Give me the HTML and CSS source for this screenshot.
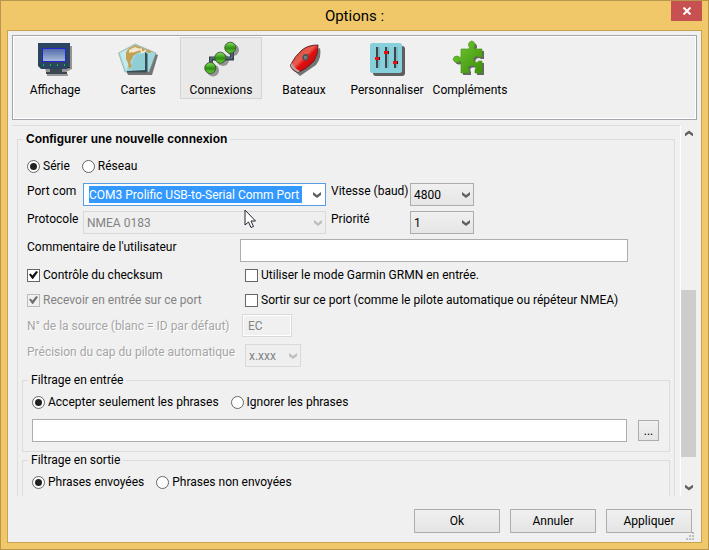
FILE: index.html
```html
<!DOCTYPE html>
<html lang="fr">
<head>
<meta charset="utf-8">
<title>Options</title>
<link rel="stylesheet" href="styles.css">
</head>
<body>
<div class="window">
  <header class="titlebar">
    <h1>Options :</h1>
    <button class="close" type="button" aria-label="Fermer"><svg width="10" height="8" viewBox="0 0 10 8"><path d="M1.5 0.5 8.5 7.5M8.5 0.5 1.5 7.5" stroke="#fff" stroke-width="2"/></svg></button>
  </header>
  <form class="content">
    <nav class="toolbar">
      <button type="button" class="tool">
        <svg viewBox="0 0 36 36"><defs><linearGradient id="scr" x2="0" y2="1"><stop stop-color="#5069a6"/><stop offset="1" stop-color="#a9bddb"/></linearGradient></defs>
          <path d="M3 5H35V28L29 31H9z" fill="#777" opacity=".75"/><path d="M10 33H31V35H10z" fill="#999"/>
          <path d="M1 2H33V25L30 28H4L1 25z" fill="#2b4461"/><path d="M13 28H25V31H30V33H9V31H13z" fill="#3b4651"/>
          <rect x="5.5" y="7.500" width="23" height="13" fill="url(#scr)" stroke="#2525cf"/>
          <path d="M6 23h1v2h-1zM13 23h1v2h-1zM20 23h1v2h-1zM27 23h1v2h-1z" fill="#13c522"/><path d="M31 26h2v1h-2z" fill="#111"/></svg>
        <span>Affichage</span>
      </button>
      <button type="button" class="tool">
        <svg viewBox="0 0 36 36"><path d="M17 6 38 14 32 34H8L1 17z" fill="#555" opacity=".8"/>
          <path d="M15 3 36 12 29 31H5L-1.500 12z" fill="#9fd9df" stroke="#8d9c98" stroke-width=".6"/>
          <path d="M0 12 15 4 10 19 6 30z" fill="#c6e9eb"/>
          <path d="M6 12 8 8 15 4 20 6 25 8 29 9 32 11 29 12 25 10 20 11 16 13 13 15 12 18 10 21 12 25 9 28 8 22 6 18z" fill="#c6a052"/><path d="M9 9 15 6 20 8 15 10 9 12z" fill="#f2e7ca"/><path d="M12 11 21 8 22 12 26 9" fill="none" stroke="#f5ecd4" stroke-width="1.5"/>
          <path d="M16 14 25 12V28L11 29 13 20z" fill="#90cdd4"/>
          <path d="M25 11V29L7 30V31.500H27.500V13z" fill="#364f55"/></svg>
        <span>Cartes</span>
      </button>
      <button type="button" class="tool selected">
        <svg viewBox="0 0 36 36"><defs><linearGradient id="grn" x2="0" y2="1"><stop stop-color="#91dd65"/><stop offset=".45" stop-color="#38a018"/><stop offset=".55" stop-color="#318d14"/><stop offset="1" stop-color="#67d835"/></linearGradient></defs>
          <g fill="#777" opacity=".75"><circle cx="30" cy="9" r="6"/><circle cx="20" cy="19" r="6"/><circle cx="10" cy="29.500" r="6"/></g>
          <path d="M8 24V17.500H29V10" fill="none" stroke="#34454e" stroke-width="4"/><path d="M8 24V17H29V10" fill="none" stroke="#718089" stroke-width="1"/>
          <g fill="url(#grn)" stroke="#3d5a32" stroke-width="1"><circle cx="27.300" cy="6.700" r="5.500"/><circle cx="17.300" cy="16.700" r="5.500"/><circle cx="7.300" cy="27" r="5.500"/></g></svg>
        <span>Connexions</span>
      </button>
      <button type="button" class="tool">
        <svg viewBox="0 0 36 36"><defs><linearGradient id="red" x1="0" y1="0" x2="1" y2="1"><stop stop-color="#b84444"/><stop offset=".45" stop-color="#ed5a4c"/><stop offset=".55" stop-color="#e20e0e"/><stop offset="1" stop-color="#9d0909"/></linearGradient></defs>
          <path d="M34 7Q36 16 30 24L14 35 6 28 18 12Z" fill="#555" opacity=".8"/>
          <path d="M32 4Q22 4 16 9Q9 15 4.500 24Q5 29 12 31.500Q21 28 28 20Q32 14 32 4z" fill="url(#red)" stroke="#612222" stroke-width="1"/>
          <path d="M4.500 24Q6 28 12 31.500L14 30Q8 27 6 22z" fill="#b5a5a5"/><path d="M18 13h4l1 3-2 4-4-1-1-3z" fill="#545454"/><path d="M18 15h3v3h-3z" fill="#797979"/></svg>
        <span>Bateaux</span>
      </button>
      <button type="button" class="tool">
        <svg viewBox="0 0 36 36"><rect x="4" y="5" width="32" height="30" rx="3" fill="#444" opacity=".85"/><rect x="1" y="2" width="32" height="30" rx="2.500" fill="#87cfdb"/>
          <path d="M8 6V27M17 6V27M26 6V27" stroke="#3c4549" stroke-width="2"/><path d="M10 6V27M19 6V27M28 6V27" stroke="#68a3ad"/>
          <path d="M6 16h4v3H6zM15 10h4v3h-4zM24 20h4v3h-4z" fill="#ed1010"/><path d="M10 16h1v3h-1zM19 10h1v3h-1zM28 20h1v3h-1z" fill="#471010"/></svg>
        <span>Personnaliser</span>
      </button>
      <button type="button" class="tool">
        <svg viewBox="0 0 36 36"><defs><linearGradient id="pz" x2="1" y2="1"><stop stop-color="#74c936"/><stop offset="1" stop-color="#3c9206"/></linearGradient>
          <path id="piece" d="M9 8H17Q18 6 16.500 4.500Q16 1 19.700 0Q23.500 1 23 4.500Q21.500 6 22.500 8H30V16H27Q24 13.500 21.500 17V20Q24 23 27 20H30V32H23V29Q25 26 22 24.500H18Q15 26 17 29V32H9V20.500Q7 20 6 21.500Q2 22 1 18Q2 14.500 6 15Q7 17 9 16z"/></defs>
          <use href="#piece" x="2" y="2" fill="#4c4c4c" opacity=".85"/><use href="#piece" fill="url(#pz)" stroke="#4b961d" stroke-width=".7"/></svg>
        <span>Compléments</span>
      </button>
    </nav>

    <div class="scrollpane">
      <div class="viewport">
        <fieldset class="connection">
          <legend class="heading">Configurer une nouvelle connexion</legend>
          <div class="choices">
            <label><input type="radio" name="type" checked>Série</label>
            <label><input type="radio" name="type">Réseau</label>
          </div>
          <div class="ports">
            <label for="port">Port com</label>
            <div class="combo">
              <input id="port" type="text" value="COM3 Prolific USB-to-Serial Comm Port">
              <button type="button" aria-label="Liste des ports"></button>
              <svg class="pointer" width="13" height="20" viewBox="0 0 13 20"><path d="M1 1V16L4.500 13 7 18.500 9.500 17.500 7 12H11.500z" fill="#fff" stroke="#223" stroke-width="1"/></svg>
            </div>
            <label for="baud">Vitesse (baud)</label>
            <div class="pick"><select id="baud"><option>4800</option></select></div>
            <label for="proto">Protocole</label>
            <div class="pick off"><select id="proto" disabled><option>NMEA 0183</option></select></div>
            <label for="prio">Priorité</label>
            <div class="pick"><select id="prio"><option>1</option></select></div>
          </div>
          <div class="comment">
            <label for="comment">Commentaire de l'utilisateur</label>
            <input class="field" id="comment" type="text">
          </div>
          <div class="checks">
            <label><input type="checkbox" checked>Contrôle du checksum</label>
            <label><input type="checkbox">Utiliser le mode Garmin GRMN en entrée.</label>
            <label class="dim"><input type="checkbox" checked disabled>Recevoir en entrée sur ce port</label>
            <label><input type="checkbox">Sortir sur ce port (comme le pilote automatique ou répéteur NMEA)</label>
          </div>
          <div class="source">
            <label for="src">N° de la source (blanc = ID par défaut)</label>
            <input class="field" id="src" type="text" value="EC" disabled>
          </div>
          <div class="precision">
            <label for="prec">Précision du cap du pilote automatique</label>
            <div class="pick off"><select id="prec" disabled><option>x.xxx</option></select></div>
          </div>
          <fieldset class="filter">
            <legend>Filtrage en entrée</legend>
            <div class="choices">
              <label><input type="radio" name="in" checked>Accepter seulement les phrases</label>
              <label><input type="radio" name="in">Ignorer les phrases</label>
            </div>
            <div class="sentences">
              <input class="field" type="text" aria-label="Phrases en entrée">
              <button type="button" class="more">...</button>
            </div>
          </fieldset>
          <fieldset class="filter">
            <legend>Filtrage en sortie</legend>
            <div class="choices">
              <label><input type="radio" name="out" checked>Phrases envoyées</label>
              <label><input type="radio" name="out">Phrases non envoyées</label>
            </div>
          </fieldset>
        </fieldset>
      </div>
      <div class="scrollbar">
        <span class="arrow up"></span>
        <span class="track"><span class="thumb"></span></span>
        <span class="arrow"></span>
      </div>
    </div>

    <footer class="actions">
      <button type="submit">Ok</button>
      <button type="button">Annuler</button>
      <button type="button">Appliquer</button>
      <svg class="grip" width="8" height="8" viewBox="0 0 8 8"><path d="M6 0h2v2H6zM3 3h2v2H3zM6 3h2v2H6zM0 6h2v2H0zM3 6h2v2H3zM6 6h2v2H6z" fill="#bdbdbd"/></svg>
    </footer>
  </form>
</div>
</body>
</html>
```
FILE: styles.css
```css
* { box-sizing: border-box; }

body {
  margin: 0;
  font: 12px/16px Roboto, sans-serif;
  color: #000;
}

button, input, select { font: inherit; color: inherit; margin: 0; border-radius: 0; }
fieldset { min-width: 0; margin: 0; border: 1px solid #dcdcdc; }
label { white-space: nowrap; }

.window {
  display: flex;
  flex-direction: column;
  height: 100vh;
  padding: 0 6px 6px;
  border: 1px solid #b8964e;
  background: #f0c869;
}

.titlebar {
  display: grid;
  grid-template-columns: 31px 1fr 31px;
  height: 29px;
}
.titlebar h1 {
  grid-column: 2;
  margin: 0;
  font-size: 15px;
  font-weight: 400;
  line-height: 30px;
  text-align: center;
}
.close {
  display: grid;
  place-items: center;
  height: 20px;
  padding: 0;
  border: 0;
  background: #c75050;
}

.content {
  display: flex;
  flex-direction: column;
  flex: 1;
  min-height: 0;
  padding: 4px 4px 0;
  border: 1px solid #c9a250;
  background: #f0f0f0;
}

.toolbar {
  display: flex;
  gap: 1px;
  height: 85px;
  padding: 1px;
  border: 1px solid #a3a5ad;
  box-shadow: inset 0 0 0 1px #fff;
}
.tool {
  display: flex;
  flex-direction: column;
  align-items: center;
  gap: 5px;
  width: 82px;
  height: 62px;
  padding: 3px 0 0;
  border: 1px solid transparent;
  background: none;
}
.tool svg { width: 36px; height: 36px; overflow: visible; }
.tool.selected { border-color: #d4d4d4; background: #e9e9e9; }

.scrollpane {
  display: flex;
  flex: 1;
  min-height: 0;
  margin-top: 5px;
}
.viewport {
  flex: 1;
  min-width: 0;
  overflow: hidden;
  padding: 5px 5px 0;
  border-top: 1px solid #dcdcdc;
  border-right: 1px solid #fff;
}

.connection { padding: 11px 46px 40px 9px; }
legend { padding: 0 3px; margin-left: -4px; }
.heading { font: bold 12px/16px "Liberation Sans", sans-serif; }

.choices { display: flex; gap: 12px; height: 16px; }
.choices label, .checks label { display: flex; align-items: center; gap: 3px; }

input[type="radio"], input[type="checkbox"] {
  display: grid;
  place-items: center;
  appearance: none;
  width: 13px;
  height: 13px;
  border: 1px solid #666;
  background: #fff;
}
input[type="radio"] { border-radius: 50%; }
input[type="radio"]:checked::after {
  content: "";
  width: 7px;
  height: 7px;
  border-radius: 50%;
  background: #222;
}
input[type="checkbox"]:checked::after {
  content: "";
  width: 9px;
  height: 8px;
  background: #111;
  clip-path: polygon(0 45%, 18% 30%, 38% 55%, 80% 0, 100% 14%, 44% 100%, 36% 100%);
}
input[type="checkbox"]:disabled { border-color: #bcbcbc; background: #f0f0f0; }
input[type="checkbox"]:disabled::after { background: #707070; }

.ports {
  display: grid;
  grid-template-columns: 56px 243px 84px 64px;
  row-gap: 5px;
  margin-top: 9px;
}
.ports > :nth-child(4n + 3) { padding-left: 5px; }

.combo {
  position: relative;
  display: flex;
  height: 23px;
  padding: 2px 0 2px 5px;
  border: 1px solid #569de5;
  background: #fff;
}
.combo input {
  flex: 1;
  min-width: 0;
  padding: 0;
  border: 0;
  background: #3399ff;
  color: #fff;
}
.combo button { width: 23px; padding: 0; border: 0; background: none; }
.pointer { position: absolute; left: 160px; top: 25px; z-index: 1; }

.pick { position: relative; height: 23px; }
.pick select {
  width: 100%;
  height: 100%;
  appearance: none;
  padding: 0 3px;
  border: 1px solid #acacac;
  background: linear-gradient(#f0f0f0, #e5e5e5);
}
.pick.off select { border-color: #d9d9d9; background: #efefef; color: #838383; opacity: 1; }

.pick::after, .combo button::after, .arrow::after {
  content: "";
  display: block;
  width: 8px;
  height: 6px;
  background: #606060;
  clip-path: polygon(0 0, 50% 50%, 100% 0, 100% 50%, 50% 100%, 0 50%);
}
.combo button::after { margin: 1px auto 0 11px; }
.pick::after { position: absolute; right: 4px; top: 9px; pointer-events: none; }
.pick.off::after { background: #bfbfbf; }

.field {
  height: 23px;
  min-width: 0;
  padding: 0 5px;
  border: 1px solid #abadb3;
  background: #fff;
}
.field:disabled {
  border-color: #d9d9d9;
  background: #f0f0f0;
  box-shadow: inset 0 0 0 1px #fff;
  color: #838383;
}

.comment { display: grid; grid-template-columns: 213px 1fr; margin-top: 5px; }

.checks {
  display: grid;
  grid-template-columns: 218px 1fr;
  grid-auto-rows: 16px;
  row-gap: 9px;
  margin-top: 5px;
}
.dim { color: #838383; }

.source, .precision { display: grid; color: #a5a5a5; text-shadow: 1px 1px #fff; }
.source { grid-template-columns: 215px 50px; align-items: center; margin-top: 6px; }
.precision { grid-template-columns: 218px 56px; margin: 7px 0 5px; }

.filter { margin: 0 -42px 0 -5px; padding: 6px 10px 9px 9px; }
.filter + .filter { padding-bottom: 40px; }
.sentences { display: flex; align-items: center; gap: 11px; margin-top: 9px; }
.sentences .field { flex: 1; }
.more, .actions button {
  padding: 0;
  border: 1px solid #acacac;
  background: linear-gradient(#f0f0f0, #e5e5e5);
}
.more { width: 21px; height: 21px; }

.scrollbar {
  display: flex;
  flex-direction: column;
  width: 16px;
}
.arrow { display: grid; place-items: center; height: 17px; }
.arrow.up { transform: scaleY(-1); }
.track { display: flex; flex: 1; align-items: flex-end; padding-bottom: 22px; }
.thumb { width: 15px; height: 53%; background: #cdcdcd; }

.actions {
  position: relative;
  display: flex;
  justify-content: flex-end;
  gap: 10px;
  padding: 13px 5px 9px;
}
.actions button { width: 86px; height: 24px; }
.grip { position: absolute; right: 3px; bottom: 2px; }
```
